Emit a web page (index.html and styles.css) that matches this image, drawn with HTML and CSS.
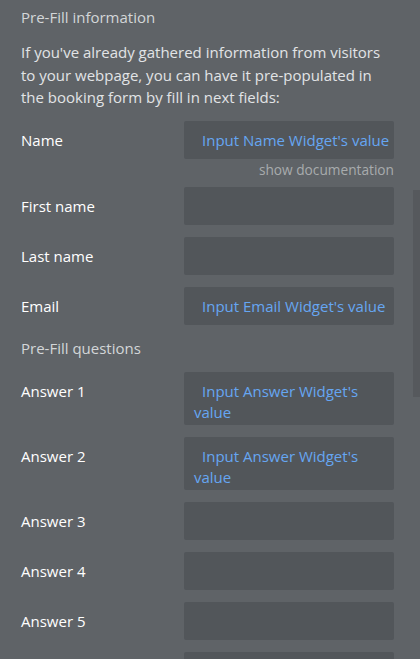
FILE: index.html
```html
<!DOCTYPE html>
<html>
<head>
<meta charset="utf-8">
<link rel="stylesheet" href="styles.css">
</head>
<body>
<div class="panel">
  <div class="section-title">Pre-Fill information</div>
  <p class="intro">If you've already gathered information from visitors to your webpage, you can have it pre-populated in the booking form by fill in next fields:</p>

  <div class="row">
    <div class="label">Name</div>
    <div class="field"><span class="val">Input Name Widget's value</span></div>
  </div>
  <div class="doc">show documentation</div>

  <div class="row first">
    <div class="label">First name</div>
    <div class="field"></div>
  </div>
  <div class="row">
    <div class="label">Last name</div>
    <div class="field"></div>
  </div>
  <div class="row">
    <div class="label">Email</div>
    <div class="field"><span class="val">Input Email Widget's value</span></div>
  </div>

  <div class="section-title sub">Pre-Fill questions</div>

  <div class="row q">
    <div class="label">Answer 1</div>
    <div class="field"><span class="val">Input Answer Widget's value</span></div>
  </div>
  <div class="row">
    <div class="label">Answer 2</div>
    <div class="field"><span class="val">Input Answer Widget's value</span></div>
  </div>
  <div class="row">
    <div class="label">Answer 3</div>
    <div class="field"></div>
  </div>
  <div class="row">
    <div class="label">Answer 4</div>
    <div class="field"></div>
  </div>
  <div class="row">
    <div class="label">Answer 5</div>
    <div class="field"></div>
  </div>
  <div class="row">
    <div class="label"></div>
    <div class="field"></div>
  </div>
</div>
<div class="scrollbar"></div>
</body>
</html>
```
FILE: styles.css
```css
html, body {
  margin: 0;
  padding: 0;
  height: 100%;
  overflow: hidden;
  background: #5f6367;
}
body {
  font-family: "Open Sans", "Liberation Sans", sans-serif;
  font-size: 15px;
  position: relative;
}
.panel {
  padding: 6px 26px 0 21px;
  display: flex;
  flex-direction: column;
}
.section-title {
  color: #d3d6d8;
  line-height: 22px;
}
.section-title.sub {
  margin-top: 12px;
}
.intro {
  margin: 13px 0 0;
  color: #e2e4e6;
  line-height: 22.5px;
}
.row {
  display: flex;
  align-items: flex-start;
  margin-top: 12px;
}
.panel > .row:first-of-type {
  margin-top: 11px;
}
.row.first {
  margin-top: 9px;
}
.row.q {
  margin-top: 13px;
}
.label {
  width: 163px;
  flex: none;
  color: #ffffff;
  padding-top: 9px;
  line-height: 21px;
}
.field {
  flex: 1;
  box-sizing: border-box;
  min-height: 38px;
  background: #52565a;
  border-radius: 2px;
  padding: 9px 2px 2px 10px;
  line-height: 21px;
  color: #66a6f2;
  text-indent: 8px;
}
.doc {
  margin-top: 3px;
  text-align: right;
  color: #a8abad;
  font-size: 13.7px;
  line-height: 16px;
}
.scrollbar {
  position: absolute;
  right: 0;
  top: 190px;
  width: 7px;
  height: 207px;
  background: #56595d;
}
```
